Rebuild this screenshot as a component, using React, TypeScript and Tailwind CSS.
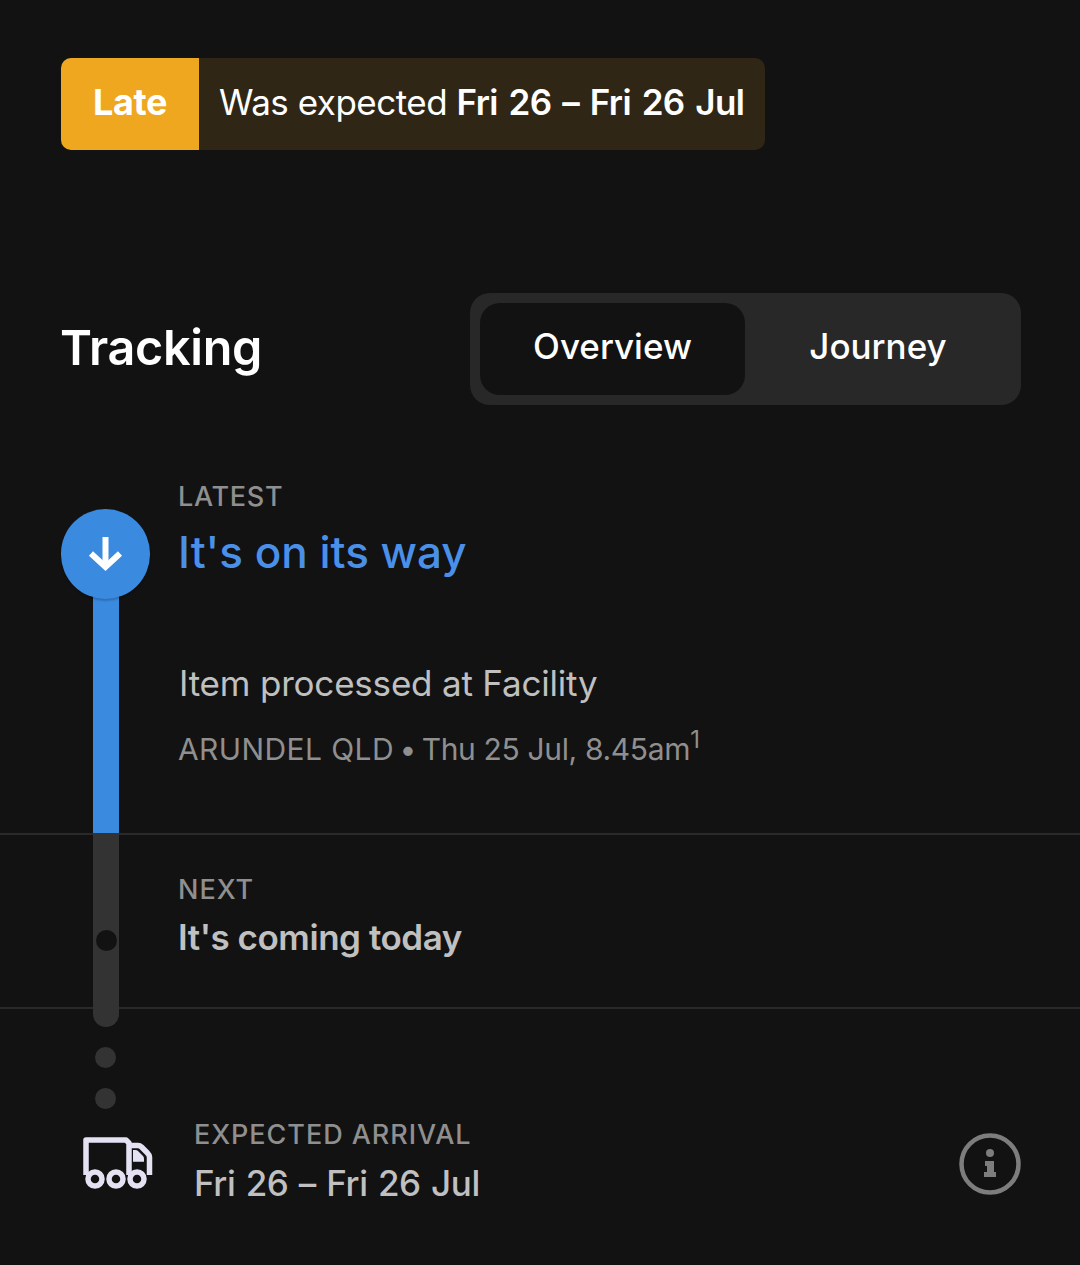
export default function App() {
  return (
    <div className="relative min-h-[1265px] w-[1080px] overflow-hidden bg-[#121212] pt-[58px] font-['Inter','Liberation_Sans',sans-serif]">
      {/* Late banner */}
      <div className="ml-[61px] flex h-[92px] w-[704px] overflow-hidden rounded-[10px] bg-[#2f2616] text-[35px] leading-[40px] tracking-[-0.5px] text-white">
        <div className="flex w-[138px] items-center justify-center bg-[#eea71f] pb-[4px] text-[36px] font-bold tracking-[-0.4px] text-white">Late</div>
        <div className="flex flex-1 items-center pb-[4px] pl-[20px] whitespace-pre">
          Was expected <span className="font-semibold tracking-[-0.6px] [word-spacing:2.4px]">Fri 26 – Fri 26 Jul</span>
        </div>
      </div>

      {/* Tracking header */}
      <div className="mt-[143px] flex items-center justify-between pr-[59px] pl-[60px]">
        <h1 className="pb-[2px] text-[48.5px] leading-[60px] font-semibold tracking-[-0.3px] text-white">Tracking</h1>
        <div className="flex h-[112px] w-[551px] rounded-[20px] bg-[#282828] p-[10px] text-[35px] leading-[40px] font-medium text-white">
          <div className="flex w-[265px] items-center justify-center rounded-[20px] bg-[#121212] pb-[6px]">Overview</div>
          <div className="flex flex-1 items-center justify-center pb-[6px]">Journey</div>
        </div>
      </div>

      {/* Latest */}
      <section className="relative h-[430px] border-b-2 border-[#2a2a2a]">
        <div className="absolute top-[190px] bottom-0 left-[93px] w-[26px] bg-[#3a8ae0]" />
        <div className="absolute top-[104px] left-[61px] flex h-[90px] w-[89px] items-center justify-center rounded-full bg-[#3a8ae0] shadow-[0_2px_2px_rgba(0,0,0,0.2)]">
          <svg width="36" height="36" viewBox="0 0 36 36" fill="none" stroke="white" strokeWidth="6">
            <path d="M17.5 1v30" />
            <path d="M3 17.5l14.5 13.5 14.5-13.5" />
          </svg>
        </div>
        <div className="pt-[76px] pl-[178px]">
          <p className="text-[27px] leading-[32px] font-medium tracking-[0.7px] text-[#8f8f8f]">LATEST</p>
          <p className="mt-[11px] text-[44px] leading-[56px] font-medium text-[#4a90e8]">It's on its way</p>
          <p className="mt-[81px] ml-[1px] text-[35px] leading-[44px] tracking-[-0.2px] text-[#c0c0c0]">Item processed at Facility</p>
          <p className="mt-[24px] text-[30px] leading-[40px] whitespace-pre text-[#8f8f8f]">
            <span className="tracking-[0.4px]">ARUNDEL QLD</span>
            <span className="[word-spacing:-3px]"> • </span>
            <span className="tracking-[-0.35px]">Thu 25 Jul, 8.45am</span>
            <sup className="text-[24px]">1</sup>
          </p>
        </div>
      </section>

      {/* Next */}
      <section className="relative h-[174px] border-b-2 border-[#2a2a2a] pt-[39px] pl-[178px]">
        <div className="absolute top-[-2px] left-[93px] flex h-[194px] w-[26px] items-start justify-center rounded-b-[13px] bg-[#333333]">
          <div className="mt-[97px] h-[21px] w-[21px] rounded-full bg-[#121212]" />
        </div>
        <p className="text-[27px] leading-[32px] font-medium tracking-[1px] text-[#8f8f8f]">NEXT</p>
        <p className="mt-[9px] text-[35px] leading-[44px] font-semibold tracking-[-0.45px] text-[#c0c0c0]">It's coming today</p>
      </section>

      {/* Expected arrival */}
      <section className="relative pt-[114px] pr-[59px] pl-[83px]">
        <div className="absolute top-[38px] left-[95px] flex flex-col gap-[20px]">
          <div className="h-[21px] w-[21px] rounded-full bg-[#333333]" />
          <div className="h-[21px] w-[21px] rounded-full bg-[#333333]" />
        </div>
        <div className="flex items-center justify-between">
          <div className="flex items-center gap-[41px]">
            <svg width="70" height="52" viewBox="0 0 70 52" fill="none" stroke="#e4e2f2" strokeWidth="5.5" strokeLinejoin="round" className="-translate-y-[3px]">
              <path d="M3 38V3h40l3 3v32" />
              <path d="M46 8.500h9q2 0 3.500 1.500l5.500 5.500q2.500 2.500 2.500 4.500v18" />
              <path d="M50 13h2.500q1.500 0 2.500 1l5 5q1 1.200 1 2.500v3.200H50z" fill="#e4e2f2" stroke="none" />
              <circle cx="12" cy="42" r="7" fill="#121212" />
              <circle cx="33" cy="42" r="7" fill="#121212" />
              <circle cx="54" cy="42" r="7" fill="#121212" />
            </svg>
            <div className="-translate-y-[4px]">
              <p className="text-[27px] leading-[32px] font-medium tracking-[0.95px] text-[#8f8f8f]">EXPECTED ARRIVAL</p>
              <p className="mt-[10px] text-[35px] leading-[44px] font-medium tracking-[-0.4px] text-[#c0c0c0] [word-spacing:1.400px]">Fri 26 – Fri 26 Jul</p>
            </div>
          </div>
          <svg width="62" height="62" viewBox="0 0 62 62" fill="#7d7d7d" className="-translate-y-[2px]">
            <circle cx="31" cy="31" r="28.500" fill="none" stroke="#7d7d7d" strokeWidth="4.500" />
            <circle cx="31" cy="20" r="4" />
            <path d="M26 28h9v11h2v5H25v-5h3v-6h-2z" />
          </svg>
        </div>
      </section>
    </div>
  );
}
